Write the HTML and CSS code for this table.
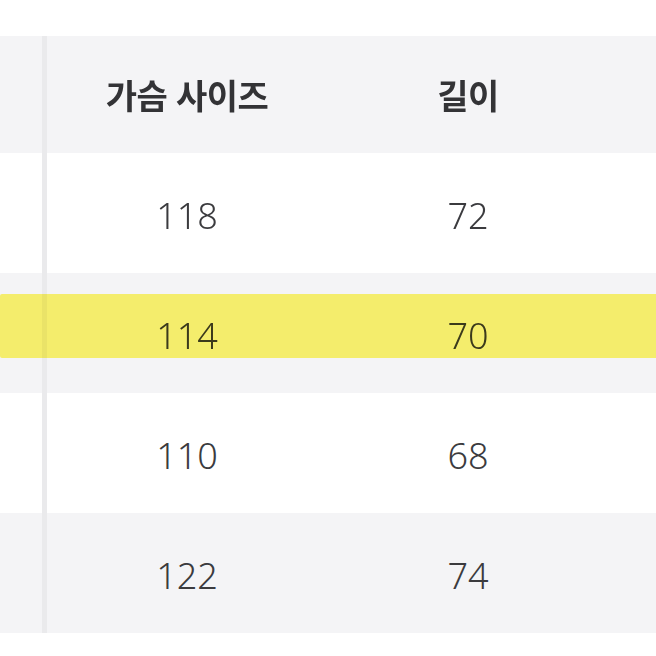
FILE: index.html
```html
<!DOCTYPE html>
<html lang="ko">
<head>
<meta charset="utf-8">
<link rel="stylesheet" href="styles.css">
</head>
<body>
<div class="sheet">
  <div class="row head">
    <div class="cell first"></div>
    <div class="cell"><span class="hd">가슴 사이즈</span></div>
    <div class="cell"><span class="hd">길이</span></div>
    <div class="cell"></div>
  </div>
  <div class="row white">
    <div class="cell first"></div>
    <div class="cell"><span class="num">118</span></div>
    <div class="cell"><span class="num">72</span></div>
    <div class="cell"></div>
  </div>
  <div class="row gray marked">
    <div class="cell first"></div>
    <div class="cell"><span class="num">114</span></div>
    <div class="cell"><span class="num">70</span></div>
    <div class="cell"></div>
    <div class="highlight"></div>
  </div>
  <div class="row white">
    <div class="cell first"></div>
    <div class="cell"><span class="num">110</span></div>
    <div class="cell"><span class="num">68</span></div>
    <div class="cell"></div>
  </div>
  <div class="row gray">
    <div class="cell first"></div>
    <div class="cell"><span class="num">122</span></div>
    <div class="cell"><span class="num">74</span></div>
    <div class="cell"></div>
  </div>
</div>
</body>
</html>
```

FILE: styles.css
```css
html, body {
  margin: 0;
  padding: 0;
  background: #ffffff;
}
body {
  padding-top: 36px;
  font-family: "Noto Sans", "Noto Sans CJK KR", sans-serif;
  color: #3a3a3c;
  overflow: hidden;
}
.sheet {
  display: flex;
  flex-direction: column;
}
.row {
  display: grid;
  grid-template-columns: 47px 280px 282px 1fr;
  height: 120px;
  position: relative;
}
.row.head {
  height: 117px;
  background: #f4f4f6;
}
.row.white { background: #ffffff; }
.row.gray { background: #f4f4f6; }
.cell {
  display: flex;
  align-items: center;
  justify-content: center;
}
.cell.first {
  border-right: 5px solid #eaeaec;
}
.hd {
  font-family: "Noto Sans CJK KR", sans-serif;
  font-weight: 700;
  font-size: 34px;
  color: #333336;
  letter-spacing: -0.6px;
  padding-bottom: 1px;
}
.num {
  display: inline-block;
  font-size: 36px;
  font-weight: 300;
  color: #3b3b3e;
  padding-top: 4px;
}
.highlight {
  position: absolute;
  left: 0;
  right: -10px;
  top: 21px;
  height: 64px;
  background: #fff870;
  mix-blend-mode: multiply;
  border-radius: 2px 6px 3px 2px;
}
```
